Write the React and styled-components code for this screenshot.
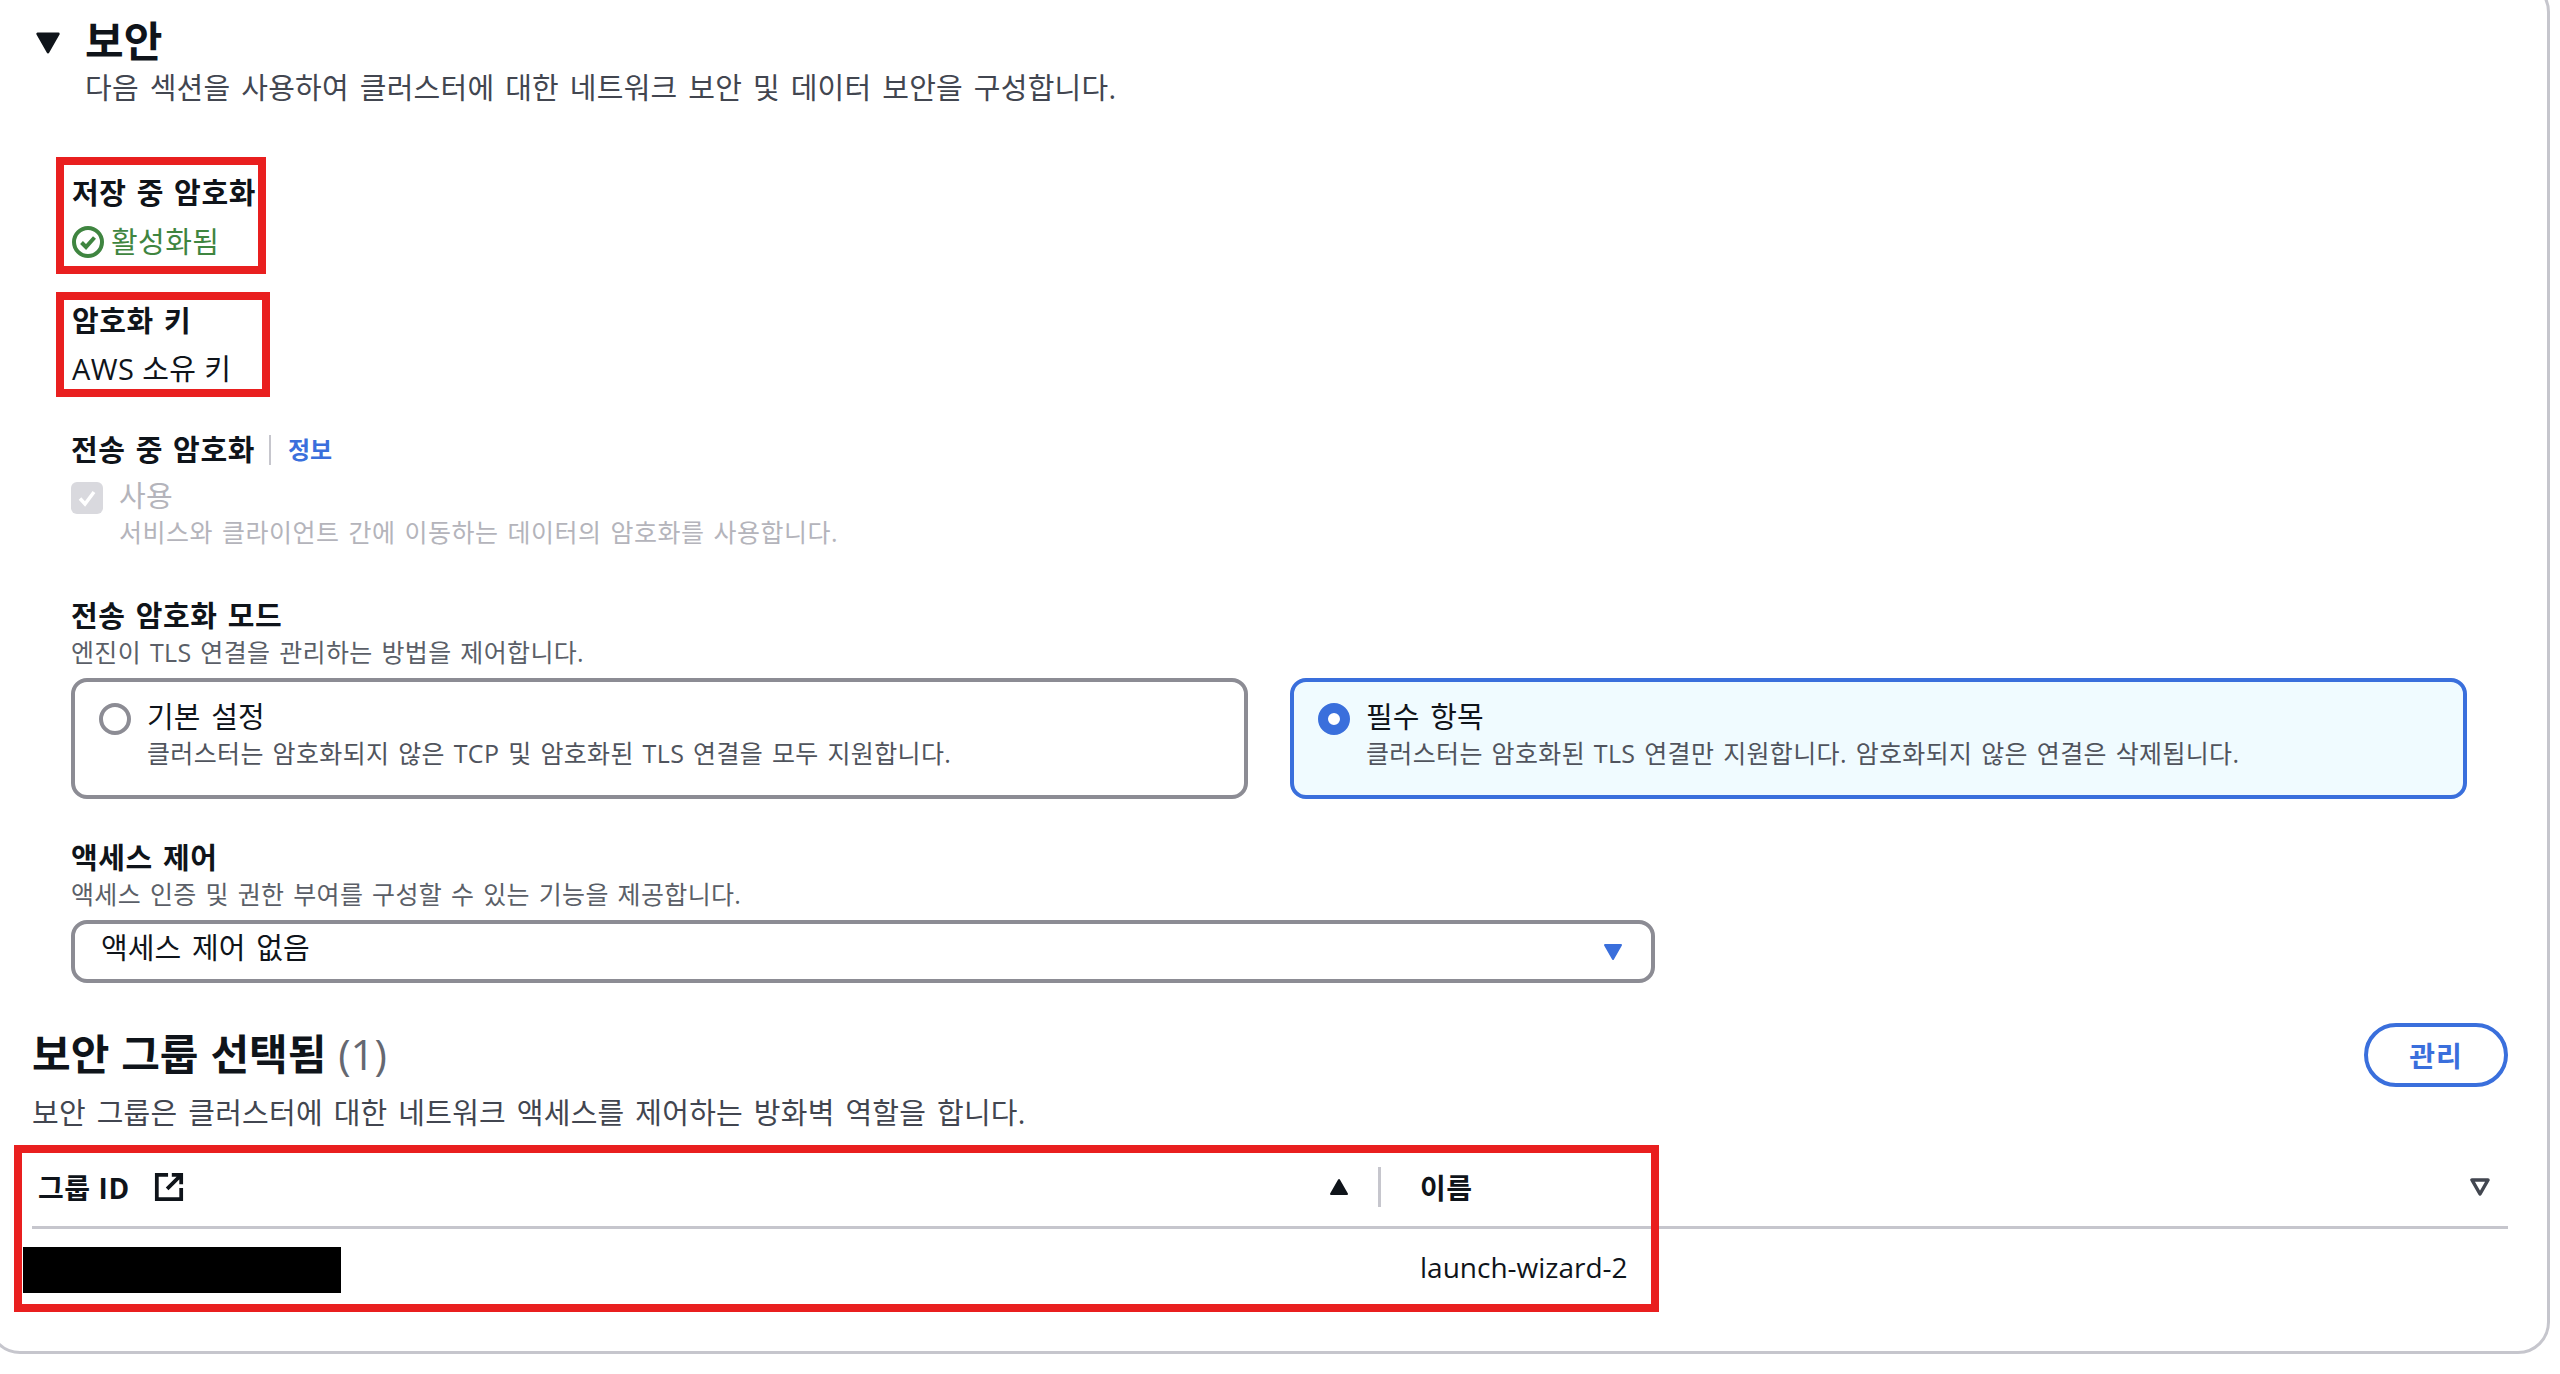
import React from 'react';
import styled, { createGlobalStyle } from 'styled-components';

const GlobalStyle = createGlobalStyle`
  html, body {
    margin: 0;
    padding: 0;
    background: #fff;
  }
  body {
    font-family: "Open Sans", "Noto Sans CJK KR", sans-serif;
    color: #0f141a;
  }
`;

const Page = styled.div`
  width: 2560px;
  height: 1374px;
  overflow: hidden;
  background: #fff;
`;

const Card = styled.div`
  box-sizing: border-box;
  width: 2562px;
  height: 1374px;
  margin: -20px 0 0 -12px;
  padding: 20px 0 0 12px;
  border: 3px solid #c6c6cd;
  border-radius: 32px;
`;

const Header = styled.header`
  display: grid;
  grid-template-columns: 25px 1fr;
  column-gap: 25px;
  margin-left: 32px;
  padding-top: 17px;
  height: 120px;
  box-sizing: border-box;
`;

const Caret = styled.span`
  margin-top: 10px;
`;

const Title = styled.h2`
  margin: 0;
  font-size: 42px;
  line-height: 42px;
  font-weight: 700;
`;

const Description = styled.p`
  margin: 0;
  font-size: 29px;
  line-height: 46px;
  color: #424650;
  letter-spacing: 0.25px;
  word-spacing: 3px;
`;

const HeaderText = styled(Description)`
  grid-column: 2;
  margin-top: -9px;
  line-height: 38px;
`;

const Body = styled.div`
  display: flex;
  flex-direction: column;
  align-items: flex-start;
  padding-left: 53px;
`;

const MarkedBox = styled.div`
  box-sizing: border-box;
  width: ${(p) => p.$width}px;
  height: ${(p) => p.$height}px;
  margin-top: ${(p) => p.$top}px;
  padding: ${(p) => p.$pad}px 0 0 8px;
  border: 8px solid #e91f1f;
`;

const Label = styled.div`
  font-size: 29px;
  line-height: 38px;
  font-weight: 700;
  letter-spacing: 0.6px;
  word-spacing: 2px;
  white-space: nowrap;
`;

const Value = styled.div`
  display: flex;
  align-items: center;
  gap: 7px;
  margin-top: ${(p) => p.$top || 10}px;
  font-size: 29px;
  line-height: 38px;
  letter-spacing: 0.4px;
  white-space: nowrap;
  color: ${(p) => p.$color || '#0f141a'};
`;

const Field = styled.section`
  margin: ${(p) => p.$top}px 0 0 15px;
`;

const LabelRow = styled.div`
  display: flex;
  align-items: center;
`;

const Divider = styled.span`
  width: 2px;
  height: 30px;
  margin: 0 17px 0 14px;
  background: #c6c6cd;
`;

const InfoLink = styled.a`
  font-size: 24px;
  line-height: 30px;
  font-weight: 700;
  color: #3a6fdc;
`;

const CheckRow = styled.div`
  display: grid;
  grid-template-columns: 32px 1fr;
  column-gap: 16px;
  margin-top: 8px;
  color: #b4b4bb;
`;

const CheckBox = styled.span`
  display: flex;
  align-items: center;
  justify-content: center;
  width: 32px;
  height: 32px;
  margin-top: 5px;
  border-radius: 6px;
  background: #d9d9de;
`;

const CheckText = styled.div`
  font-size: 29px;
  line-height: 38px;
  letter-spacing: 0.4px;
`;

const CheckHint = styled.div`
  grid-column: 2;
  font-size: 25px;
  line-height: 34px;
  letter-spacing: 0.5px;
  word-spacing: 2px;
`;

const Hint = styled.div`
  font-size: 25px;
  line-height: 34px;
  color: #5b5f68;
  letter-spacing: 0.35px;
  word-spacing: 2px;
  white-space: nowrap;
`;

const RadioGroup = styled.div`
  display: grid;
  grid-template-columns: 1177px 1177px;
  column-gap: 42px;
  margin-top: 9px;
`;

const RadioCard = styled.div`
  box-sizing: border-box;
  display: grid;
  grid-template-columns: 32px 1fr;
  column-gap: 16px;
  height: 121px;
  padding: 16px 24px 0 24px;
  border: 4px solid ${(p) => (p.$selected ? '#3a6fdc' : '#8c8c94')};
  border-radius: 16px;
  background: ${(p) => (p.$selected ? '#f0fbff' : '#fff')};
`;

const RadioDot = styled.span`
  box-sizing: border-box;
  width: 32px;
  height: 32px;
  margin-top: 5px;
  border-radius: 50%;
  background: #fff;
  border: ${(p) => (p.$selected ? '10px solid #3a6fdc' : '4px solid #8c8c94')};
`;

const RadioTitle = styled.div`
  font-size: 29px;
  line-height: 38px;
  letter-spacing: 0.1px;
  word-spacing: 3px;
`;

const RadioHint = styled(Hint)`
  color: #50545d;
`;

const Select = styled.div`
  box-sizing: border-box;
  display: flex;
  align-items: center;
  justify-content: space-between;
  width: 1584px;
  height: 63px;
  margin-top: 9px;
  padding: 0 28px 0 26px;
  border: 4px solid #8c8c94;
  border-radius: 16px;
  font-size: 29px;
  letter-spacing: 0.1px;
  word-spacing: 3px;
`;

const SelectText = styled.span`
  padding-bottom: 11px;
`;

const GroupSection = styled.section`
  margin: 39px 0 0 29px;
  width: 2476px;
`;

const GroupHeader = styled.div`
  display: flex;
  align-items: flex-start;
  justify-content: space-between;
  height: 68px;
`;

const GroupTitle = styled.h3`
  margin: 4px 0 0;
  font-size: 42px;
  line-height: 56px;
  font-weight: 700;
  word-spacing: 1px;
`;

const Count = styled.span`
  font-weight: 400;
  color: #656871;
`;

const ManageButton = styled.button`
  box-sizing: border-box;
  width: 144px;
  height: 64px;
  margin-top: 1px;
  padding: 0;
  border: 4px solid #3a6fdc;
  border-radius: 32px;
  background: #fff;
  color: #3a6fdc;
  font-family: inherit;
  font-size: 28px;
  font-weight: 700;
  letter-spacing: 1px;
`;

const TableWrap = styled.div`
  position: relative;
  margin-top: 11px;
`;

const Redaction = styled.div`
  width: 318px;
  height: 46px;
  margin-left: -9px;
  background: #000;
`;

const TableGrid = styled.div`
  display: grid;
  grid-template-columns: 1349px 1fr;
`;

const HeadCell = styled.div`
  display: flex;
  align-items: center;
  height: 79px;
  padding-left: ${(p) => p.$pad || 0}px;
  padding-right: ${(p) => p.$padRight || 0}px;
  border-bottom: 3px solid #c6c6cd;
  font-size: 28px;
  font-weight: 700;
  letter-spacing: 0.6px;
`;

const HeadText = styled.span`
  white-space: nowrap;
`;

const HeadLink = styled.span`
  display: flex;
  margin-left: 24px;
`;

const HeadGap = styled.span`
  flex: 1;
`;

const ColDivider = styled.span`
  width: 3px;
  height: 40px;
  margin-left: 29px;
  background: #c6c6cd;
`;

const IdCell = styled.div`
  padding-top: 18px;
`;

const NameCell = styled.div`
  padding: 20px 0 0 39px;
  font-size: 28px;
  line-height: 36px;
`;

const RedFrame = styled.div`
  position: absolute;
  left: -18px;
  top: -2px;
  width: 1645px;
  height: 167px;
  box-sizing: border-box;
  border: 8px solid #e91f1f;
  pointer-events: none;
`;

const StatusIcon = () => (
  <svg width="32" height="32" viewBox="0 0 32 32" fill="none" stroke="#3f8540">
    <circle cx="16" cy="16" r="14" strokeWidth="4" />
    <path d="M9.5 16.5 14 21l8.5-9.5" strokeWidth="4" />
  </svg>
);

const CheckIcon = () => (
  <svg width="24" height="24" viewBox="0 0 24 24" fill="none" stroke="#fff" strokeWidth="3.5">
    <path d="M5 12.5 10 18l9-12" />
  </svg>
);

const Triangle = ({ size = 20, color = '#0f141a', down = true, outline = false }) => (
  <svg width={size} height={size} viewBox="0 0 20 20">
    <path
      d={down ? 'M2 3h16l-8 14z' : 'M2 17h16L10 3z'}
      fill={outline ? 'none' : color}
      stroke={color}
      strokeWidth={outline ? 3.5 : 2}
      strokeLinejoin="round"
    />
  </svg>
);

const ExternalIcon = () => (
  <svg width="30" height="30" viewBox="0 0 16 16" fill="none" stroke="#0f141a" strokeWidth="2">
    <path d="M14.5 8.5v6h-13v-13h6M9.5 1.5h5v5M14.5 1.5 7 9" />
  </svg>
);

export default function App() {
  return (
    <Page>
      <GlobalStyle />
      <Card>
        <Header>
          <Caret>
            <Triangle size={26} />
          </Caret>
          <Title>보안</Title>
          <HeaderText>다음 섹션을 사용하여 클러스터에 대한 네트워크 보안 및 데이터 보안을 구성합니다.</HeaderText>
        </Header>

        <Body>
          <MarkedBox $width={210} $height={117} $top={34} $pad={9}>
            <Label>저장 중 암호화</Label>
            <Value $color="#3f8540" $top={11}>
              <StatusIcon />
              활성화됨
            </Value>
          </MarkedBox>

          <MarkedBox $width={214} $height={105} $top={18} $pad={2}>
            <Label>암호화 키</Label>
            <Value $top={10}>AWS 소유 키</Value>
          </MarkedBox>

          <Field $top={34}>
            <LabelRow>
              <Label>전송 중 암호화</Label>
              <Divider />
              <InfoLink>정보</InfoLink>
            </LabelRow>
            <CheckRow>
              <CheckBox>
                <CheckIcon />
              </CheckBox>
              <CheckText>사용</CheckText>
              <CheckHint>서비스와 클라이언트 간에 이동하는 데이터의 암호화를 사용합니다.</CheckHint>
            </CheckRow>
          </Field>

          <Field $top={48}>
            <Label>전송 암호화 모드</Label>
            <Hint>엔진이 TLS 연결을 관리하는 방법을 제어합니다.</Hint>
            <RadioGroup>
              <RadioCard>
                <RadioDot />
                <div>
                  <RadioTitle>기본 설정</RadioTitle>
                  <RadioHint>클러스터는 암호화되지 않은 TCP 및 암호화된 TLS 연결을 모두 지원합니다.</RadioHint>
                </div>
              </RadioCard>
              <RadioCard $selected>
                <RadioDot $selected />
                <div>
                  <RadioTitle>필수 항목</RadioTitle>
                  <RadioHint>클러스터는 암호화된 TLS 연결만 지원합니다. 암호화되지 않은 연결은 삭제됩니다.</RadioHint>
                </div>
              </RadioCard>
            </RadioGroup>
          </Field>

          <Field $top={40}>
            <Label>액세스 제어</Label>
            <Hint>액세스 인증 및 권한 부여를 구성할 수 있는 기능을 제공합니다.</Hint>
            <Select>
              <SelectText>액세스 제어 없음</SelectText>
              <Triangle color="#3a6fdc" />
            </Select>
          </Field>
        </Body>

        <GroupSection>
          <GroupHeader>
            <GroupTitle>
              보안 그룹 선택됨 <Count>(1)</Count>
            </GroupTitle>
            <ManageButton>관리</ManageButton>
          </GroupHeader>
          <Description>보안 그룹은 클러스터에 대한 네트워크 액세스를 제어하는 방화벽 역할을 합니다.</Description>
          <TableWrap>
            <TableGrid>
              <HeadCell $pad={6}>
                <HeadText>그룹 ID</HeadText>
                <HeadLink>
                  <ExternalIcon />
                </HeadLink>
                <HeadGap />
                <Triangle down={false} />
                <ColDivider />
              </HeadCell>
              <HeadCell $pad={39} $padRight={18}>
                <HeadText>이름</HeadText>
                <HeadGap />
                <Triangle outline color="#424650" />
              </HeadCell>
              <IdCell>
                <Redaction />
              </IdCell>
              <NameCell>launch-wizard-2</NameCell>
            </TableGrid>
            <RedFrame />
          </TableWrap>
        </GroupSection>
      </Card>
    </Page>
  );
}
